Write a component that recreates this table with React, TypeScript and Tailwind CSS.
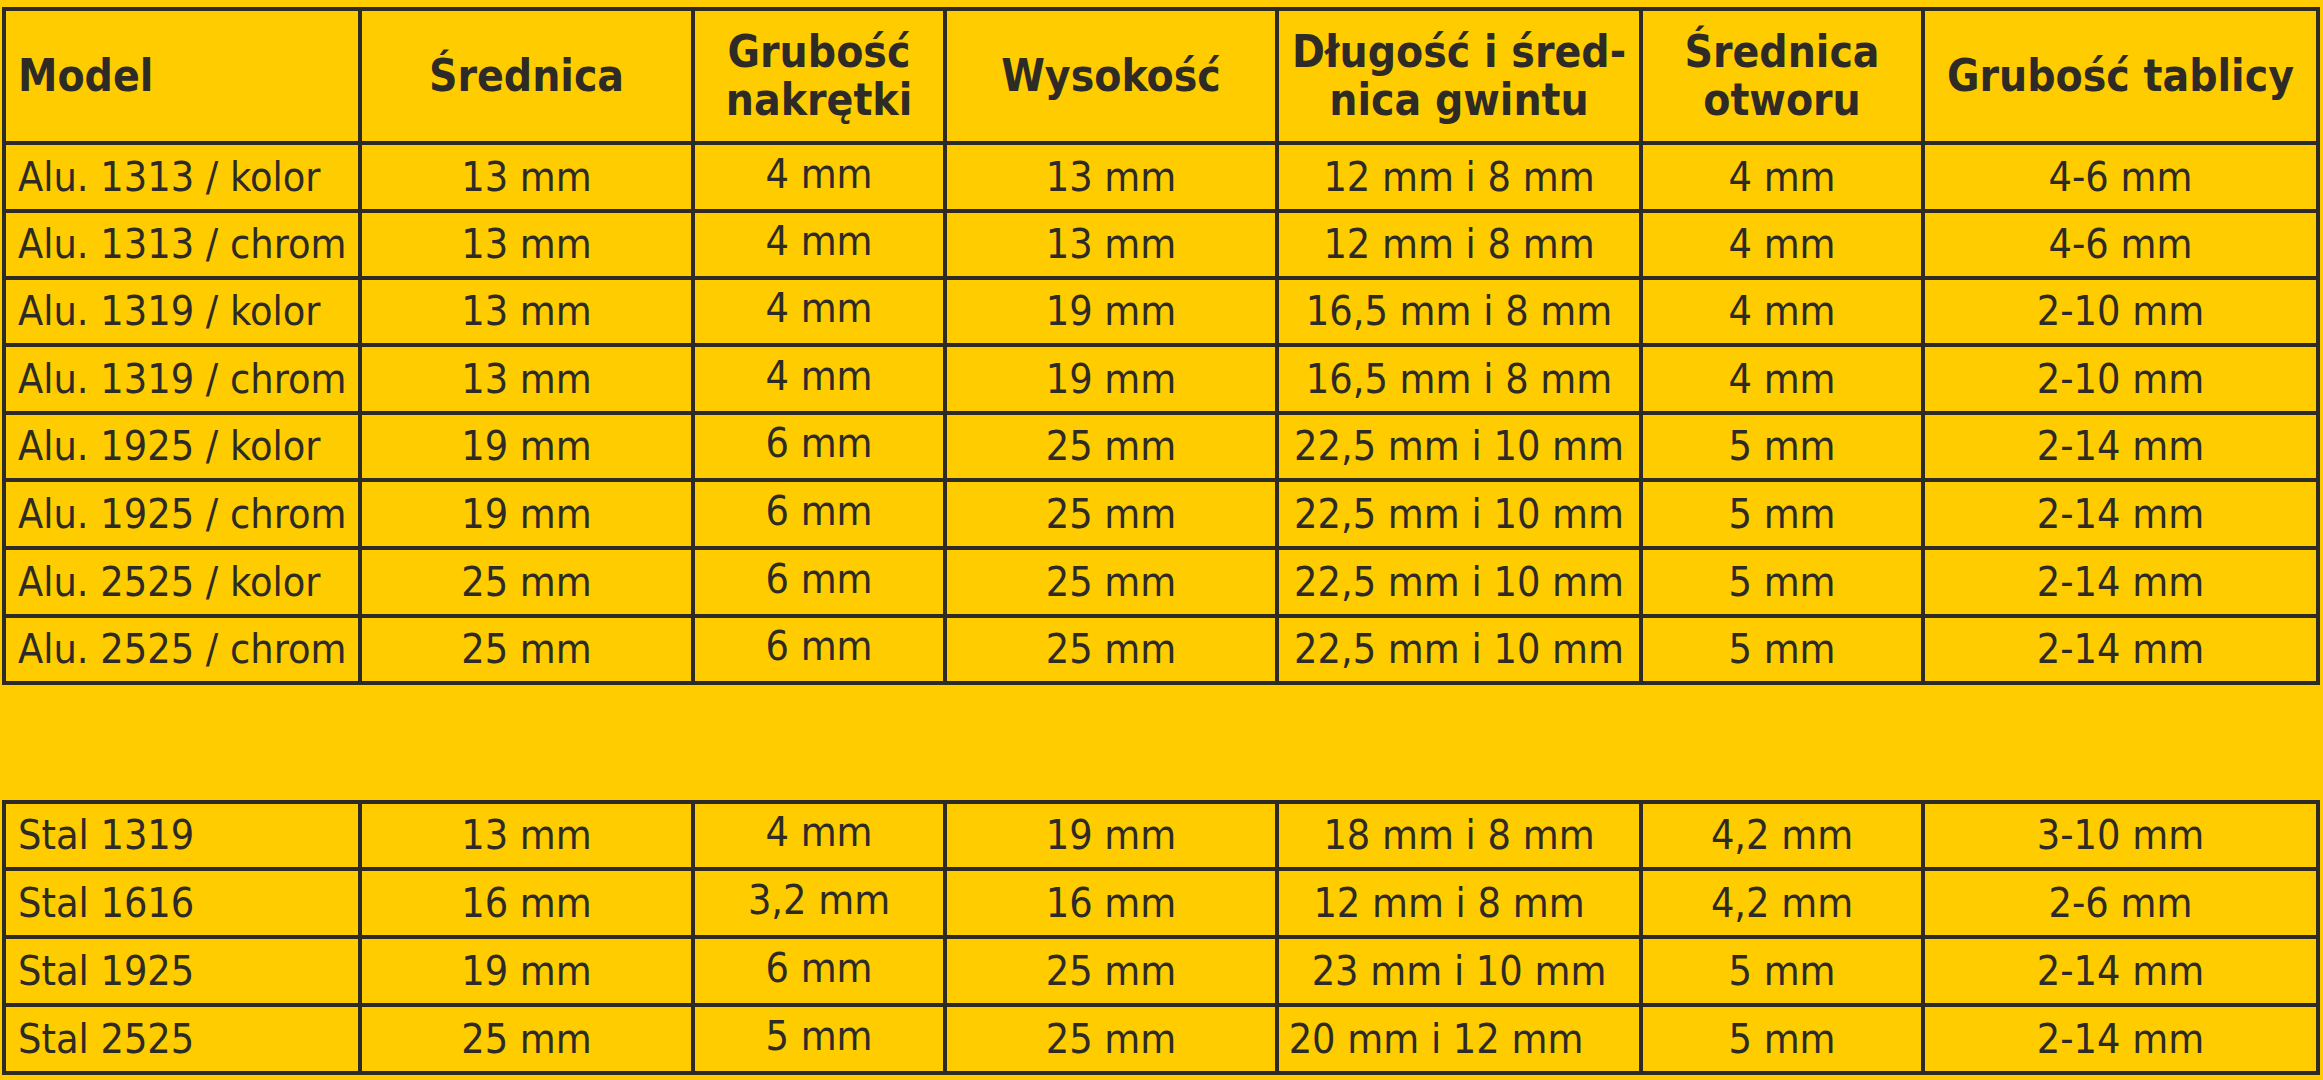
import React from 'react';

const cols = ['w-[356px]', 'w-[333px]', 'w-[252px]', 'w-[332px]', 'w-[364px]', 'w-[282px]', 'w-[395px]'];

const aluRows = [
  { h: 'h-[68px]', cells: ['Alu. 1313 / kolor', '13 mm', '4 mm', '13 mm', '12 mm i 8 mm', '4 mm', '4-6 mm'] },
  { h: 'h-[67px]', cells: ['Alu. 1313 / chrom', '13 mm', '4 mm', '13 mm', '12 mm i 8 mm', '4 mm', '4-6 mm'] },
  { h: 'h-[67px]', cells: ['Alu. 1319 / kolor', '13 mm', '4 mm', '19 mm', '16,5 mm i 8 mm', '4 mm', '2-10 mm'] },
  { h: 'h-[68px]', cells: ['Alu. 1319 / chrom', '13 mm', '4 mm', '19 mm', '16,5 mm i 8 mm', '4 mm', '2-10 mm'] },
  { h: 'h-[67px]', cells: ['Alu. 1925 / kolor', '19 mm', '6 mm', '25 mm', '22,5 mm i 10 mm', '5 mm', '2-14 mm'] },
  { h: 'h-[68px]', cells: ['Alu. 1925 / chrom', '19 mm', '6 mm', '25 mm', '22,5 mm i 10 mm', '5 mm', '2-14 mm'] },
  { h: 'h-[68px]', cells: ['Alu. 2525 / kolor', '25 mm', '6 mm', '25 mm', '22,5 mm i 10 mm', '5 mm', '2-14 mm'] },
  { h: 'h-[67px]', cells: ['Alu. 2525 / chrom', '25 mm', '6 mm', '25 mm', '22,5 mm i 10 mm', '5 mm', '2-14 mm'] },
];

const stalRows = [
  { h: 'h-[67px]', cells: ['Stal 1319', '13 mm', '4 mm', '19 mm', '18 mm i 8 mm', '4,2 mm', '3-10 mm'] },
  { h: 'h-[68px]', cells: ['Stal 1616', '16 mm', '3,2 mm', '16 mm', '12 mm i 8 mm', '4,2 mm', '2-6 mm'], shift: 'pr-[20px]' },
  { h: 'h-[68px]', cells: ['Stal 1925', '19 mm', '6 mm', '25 mm', '23 mm i 10 mm', '5 mm', '2-14 mm'] },
  { h: 'h-[68px]', cells: ['Stal 2525', '25 mm', '5 mm', '25 mm', '20 mm i 12 mm', '5 mm', '2-14 mm'], shift: 'pr-[46px]' },
];

const headers: React.ReactNode[] = [
  'Model',
  'Średnica',
  <>Grubość<br />nakrętki</>,
  'Wysokość',
  <>Długość i śred-<br />nica gwintu</>,
  <>Średnica<br />otworu</>,
  'Grubość tablicy',
];

function Row({ h, cells, shift }: { h: string; cells: string[]; shift?: string }) {
  return (
    <div className={`flex ${h}`}>
      {cells.map((c, i) => (
        <div
          key={i}
          className={`${cols[i]} shrink-0 flex items-center whitespace-nowrap border-r-4 border-b-4 border-[#2e2b26] ${
            i === 0 ? 'justify-start pl-3' : 'justify-center'
          } ${i === 2 ? 'pb-[6px]' : ''} ${i === 4 && shift ? shift : ''}`}
        >
          {c}
        </div>
      ))}
    </div>
  );
}

export default function App() {
  return (
    <div
      className="w-[2323px] h-[1080px] overflow-hidden bg-[#ffcc00] text-[#2e2b26] pt-[7px] pl-[2px]"
      style={{ fontFamily: '"DejaVu Sans Condensed", "DejaVu Sans", sans-serif' }}
    >
      {/* Aluminium */}
      <div className="w-[2318px] border-t-4 border-l-4 border-[#2e2b26] text-[41px] leading-none">
        <div className="flex h-[134px] font-bold text-[44px] leading-[1.1]">
          {headers.map((h, i) => (
            <div
              key={i}
              className={`${cols[i]} shrink-0 flex items-center border-r-4 border-b-4 border-[#2e2b26] ${
                i === 0 ? 'justify-start pl-3' : 'justify-center text-center'
              }`}
            >
              <span>{h}</span>
            </div>
          ))}
        </div>
        {aluRows.map((r, i) => (
          <Row key={i} {...r} />
        ))}
      </div>

      {/* Stal */}
      <div className="mt-[115px] w-[2318px] border-t-4 border-l-4 border-[#2e2b26] text-[41px] leading-none">
        {stalRows.map((r, i) => (
          <Row key={i} {...r} />
        ))}
      </div>
    </div>
  );
}
